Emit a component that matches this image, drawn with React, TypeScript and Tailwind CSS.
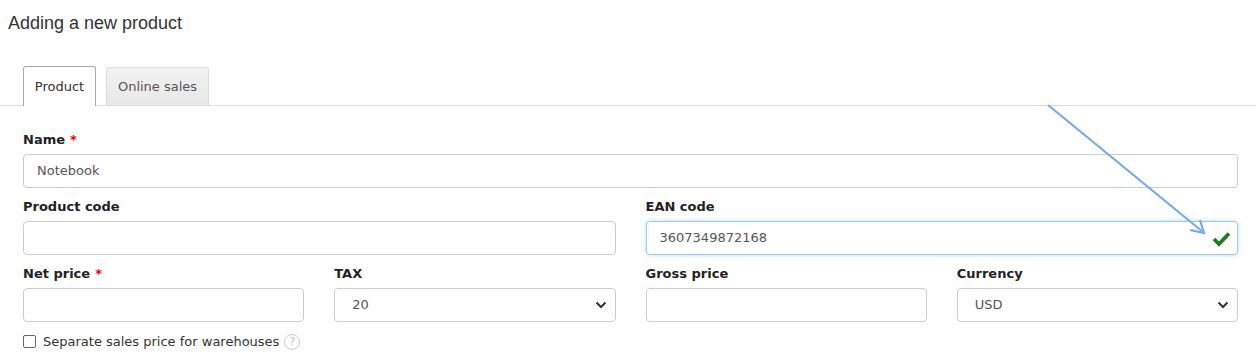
import React from 'react';

const font = { fontFamily: '"DejaVu Sans", Verdana, sans-serif' };

function Label({ text, required }: { text: string; required?: boolean }) {
  return (
    <label className="block text-[13px] font-bold text-[#222] leading-[14px] mb-[7px] pt-[1px]">
      {text}
      {required && <span className="text-[#e00] ml-[5px]">*</span>}
    </label>
  );
}

function TextInput({ value = '', active }: { value?: string; active?: boolean }) {
  return (
    <div
      className={`h-[34px] rounded-[4px] border bg-white flex items-center px-[13px] text-[13px] text-[#555] ${
        active ? 'border-[#9ecaed] shadow-[0_0_4px_rgba(102,175,233,0.45)]' : 'border-[#ccc]'
      }`}
    >
      <span className="flex-1">{value}</span>
      {active && (
        <svg width="19" height="17" viewBox="0 0 19 17" className="mr-[-7px]">
          <path d="M2 9 L7 14 L17 3.5" fill="none" stroke="#1e7b1e" strokeWidth="3.8" />
        </svg>
      )}
    </div>
  );
}

function SelectBox({ value }: { value: string }) {
  return (
    <div className="h-[34px] rounded-[4px] border border-[#ccc] bg-white flex items-center px-[17px] text-[13px] text-[#555]">
      <span className="flex-1">{value}</span>
      <svg width="12" height="8" viewBox="0 0 12 8" className="mr-[-9px]">
        <path d="M1.5 1.5 L6 6 L10.5 1.5" fill="none" stroke="#333" strokeWidth="2" />
      </svg>
    </div>
  );
}

export default function App() {
  return (
    <div className="relative w-[1256px] h-[358px] bg-white overflow-hidden" style={font}>
      <h1
        className="pl-[8px] pt-[11px] text-[18px] leading-[24px] text-[#333]"
        style={{ fontFamily: '"Liberation Sans", Arial, sans-serif' }}
      >
        Adding a new product
      </h1>

      <div className="mt-[31px] flex items-end gap-[10px] pl-[23px] border-b border-[#ddd]">
        <div className="w-[73px] h-[40px] flex items-center justify-center border border-[#aaa] border-b-0 rounded-t-[3px] bg-white text-[13px] text-[#333] mb-[-1px] relative">
          Product
        </div>
        <div className="w-[103px] h-[38px] flex items-center justify-center border border-[#ddd] border-b-0 rounded-t-[3px] bg-gradient-to-b from-[#f2f2f2] to-[#e8e8e8] text-[13px] text-[#555]">
          Online sales
        </div>
      </div>

      <div className="px-[23px] pt-[26px] pr-[18px]">
        <div className="mb-[11px]">
          <Label text="Name" required />
          <TextInput value="Notebook" />
        </div>

        <div className="grid grid-cols-2 gap-x-[30px] mb-[11px]">
          <div>
            <Label text="Product code" />
            <TextInput />
          </div>
          <div>
            <Label text="EAN code" />
            <TextInput value="3607349872168" active />
          </div>
        </div>

        <div className="grid grid-cols-4 gap-x-[30px]">
          <div>
            <Label text="Net price" required />
            <TextInput />
          </div>
          <div>
            <Label text="TAX" />
            <SelectBox value="20" />
          </div>
          <div>
            <Label text="Gross price" />
            <TextInput />
          </div>
          <div>
            <Label text="Currency" />
            <SelectBox value="USD" />
          </div>
        </div>

        <div className="mt-[10px] flex items-center text-[13px] text-[#333]">
          <span className="w-[13px] h-[13px] border border-[#666] rounded-[2px] bg-white mr-[7px]" />
          <span>Separate sales price for warehouses</span>
          <span className="ml-[5px] w-[16px] h-[16px] rounded-full border border-[#ccc] text-[10px] text-[#bbb] flex items-center justify-center leading-none">
            ?
          </span>
        </div>
      </div>

      <svg className="absolute left-0 top-0 pointer-events-none" width="1256" height="358">
        <line x1="1048" y1="105" x2="1203" y2="232" stroke="#78a9f0" strokeWidth="2.2" />
        <path d="M1190 230 L1204 233 L1200 220" fill="none" stroke="#78a9f0" strokeWidth="2.2" />
      </svg>
    </div>
  );
}
